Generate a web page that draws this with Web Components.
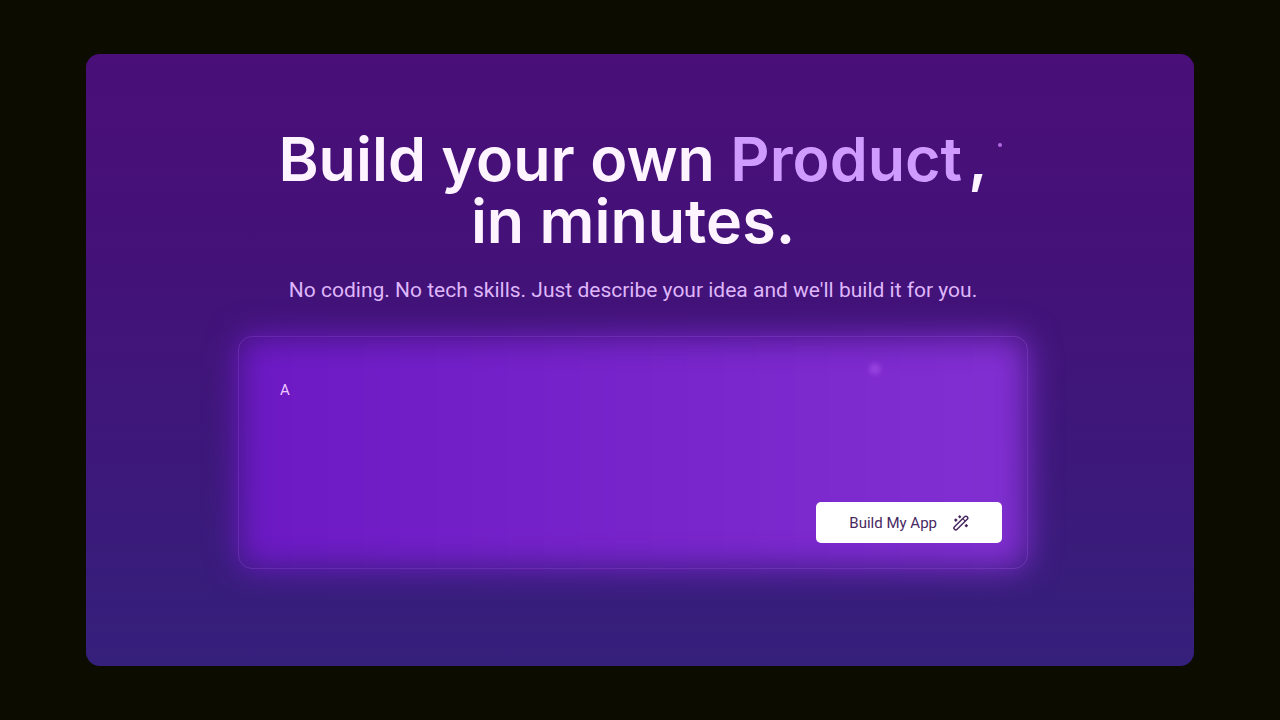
<!DOCTYPE html>
<html lang="en">
<head>
<meta charset="utf-8">
<meta name="viewport" content="width=device-width, initial-scale=1">
<title>Build your own Product</title>
<style>
  body {
    margin: 0;
    background: #0c0d00;
    font-family: Inter, "Noto Sans", sans-serif;
  }
</style>
</head>
<body>
<hero-stage>
  <hero-heading>
    Build your own <em>Product</em>,<br>in minutes.
    <span slot="lead">No coding. No tech skills. Just describe your idea and we'll build it for you.</span>
  </hero-heading>
  <prompt-box value="A">
    <build-button slot="action">Build My App</build-button>
  </prompt-box>
</hero-stage>

<script>
class HeroStage extends HTMLElement {
  constructor() {
    super();
    this.attachShadow({ mode: "open" }).innerHTML = `
      <style>
        :host {
          display: flex;
          box-sizing: border-box;
          min-height: 100vh;
          padding: 54px 86px;
        }
        main {
          position: relative;
          flex: 1;
          display: flex;
          flex-direction: column;
          align-items: center;
          gap: 32px;
          box-sizing: border-box;
          padding: 74px 166px 94px 152px;
          border-radius: 14px;
          background: linear-gradient(180deg, #4a0f78 0%, #431278 35%, #3c197a 70%, #35207c 100%);
        }
        .spark {
          position: absolute;
          border-radius: 50%;
        }
        .small {
          top: 89px;
          right: 192px;
          width: 4px;
          height: 4px;
          background: #b26be0;
        }
        .large {
          z-index: 1;
          top: 309px;
          right: 313px;
          width: 12px;
          height: 12px;
          background: #9440de;
          filter: blur(2px);
        }
        ::slotted(prompt-box) { align-self: stretch; }
      </style>
      <main>
        <slot></slot>
        <span class="spark small"></span>
        <span class="spark large"></span>
      </main>`;
  }
}

class HeroHeading extends HTMLElement {
  constructor() {
    super();
    this.attachShadow({ mode: "open" }).innerHTML = `
      <style>
        :host { display: block; text-align: center; }
        h1 {
          margin: 0;
          color: #fdf4ff;
          font-size: 61px;
          font-weight: 600;
          line-height: 62px;
        }
        ::slotted(em) {
          padding-right: 6px;
          color: #cf9bff;
          font-style: normal;
        }
        p {
          margin: 24px 0 0;
          color: #dfb6fa;
          font-family: Roboto, "Noto Sans", sans-serif;
          font-size: 21px;
          line-height: 28px;
        }
      </style>
      <h1><slot></slot></h1>
      <p><slot name="lead"></slot></p>`;
  }
}

class PromptBox extends HTMLElement {
  constructor() {
    super();
    this.attachShadow({ mode: "open" }).innerHTML = `
      <style>
        :host { display: block; }
        form {
          position: relative;
          display: flex;
          flex-direction: column;
          align-items: flex-end;
          gap: 20px;
          box-sizing: border-box;
          padding: 41px 25px 25px 41px;
          border: 1px solid rgba(176, 110, 235, 0.32);
          border-radius: 14px;
        }
        form::before {
          content: "";
          position: absolute;
          inset: 0;
          border-radius: 14px;
          background: linear-gradient(90deg, #6c19c4, #822fd2);
          filter: blur(16px);
        }
        textarea {
          position: relative;
          align-self: stretch;
          height: 104px;
          padding: 0;
          border: 0;
          outline: 0;
          resize: none;
          background: transparent;
          color: #efc8ff;
          font: 400 15px/24px Roboto, "Noto Sans", sans-serif;
        }
        ::slotted(build-button) { position: relative; }
      </style>
      <form>
        <textarea aria-label="Describe your idea"></textarea>
        <slot name="action"></slot>
      </form>`;
  }
  connectedCallback() {
    this.shadowRoot.querySelector("textarea").value = this.getAttribute("value") || "";
  }
}

class BuildButton extends HTMLElement {
  constructor() {
    super();
    this.attachShadow({ mode: "open" }).innerHTML = `
      <style>
        :host { display: block; }
        button {
          display: flex;
          align-items: center;
          gap: 16px;
          height: 41px;
          padding: 0 33px;
          border: 0;
          border-radius: 5px;
          background: #fff;
          color: #47285f;
          font: 400 15px/20px Roboto, "Noto Sans", sans-serif;
          cursor: pointer;
        }
        svg { display: block; width: 16px; height: 16px; }
      </style>
      <button type="button">
        <slot></slot>
        <svg viewBox="0 0 16 16" fill="none" stroke="#47285f" stroke-width="1.5" aria-hidden="true">
          <path d="M1.500 11.700 11.600 1.700a1.800 1.800 0 0 1 2.600 2.600L4.100 14.300a1.800 1.800 0 0 1-2.600-2.600Z"/>
          <path d="m9.800 3.700 2.400 2.400" stroke-width="1.100"/>
          <g fill="#47285f" stroke="none">
            <path d="m2.800 3.200 1.900 1.900L2.800 7 .9 5.100Z"/>
            <path d="m6.700 0 1.700 1.700-1.700 1.700L5 1.700Z"/>
            <path d="m13.300 8.800 1.900 1.900-1.900 1.900-1.900-1.900Z"/>
          </g>
        </svg>
      </button>`;
  }
}

customElements.define("hero-stage", HeroStage);
customElements.define("hero-heading", HeroHeading);
customElements.define("prompt-box", PromptBox);
customElements.define("build-button", BuildButton);
</script>
</body>
</html>
